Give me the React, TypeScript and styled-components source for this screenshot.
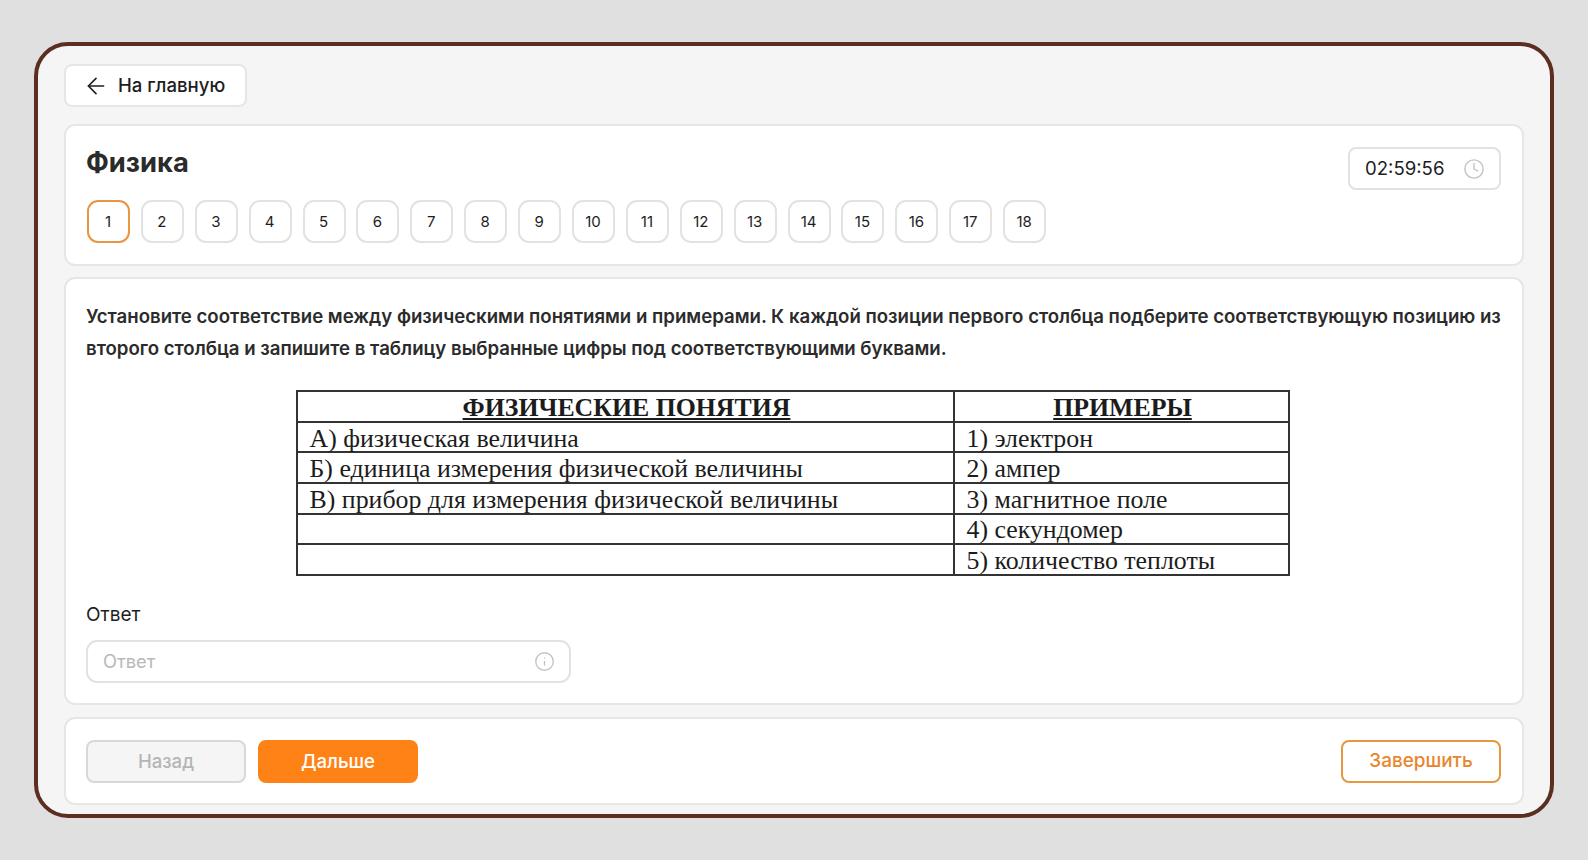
import React from "react";
import styled, { createGlobalStyle } from "styled-components";
import { ArrowLeft, Clock, Info } from "lucide-react";

const Global = createGlobalStyle`
  html, body { margin: 0; padding: 0; background: #e0e0e0; }
  body { font-family: Inter, "Noto Sans", sans-serif; color: #1e1e1e; }
  * { box-sizing: border-box; }
`;

const Page = styled.div`
  width: 1588px;
  height: 860px;
  padding: 42px 34px;
  overflow: hidden;
`;

const Frame = styled.main`
  width: 1520px;
  height: 776px;
  padding: 18px 26px 0;
  display: flex;
  flex-direction: column;
  background: #f5f5f5;
  border: 4px solid #5c2e22;
  border-radius: 34px;
`;

const BackButton = styled.button`
  width: 183px;
  height: 43px;
  padding: 0 0 0 17px;
  margin-bottom: 17px;
  display: flex;
  align-items: center;
  gap: 9px;
  background: #fff;
  border: 2px solid #e6e6e6;
  border-radius: 8px;
  font: 500 18.6px/1 Inter, sans-serif;
  color: #1e1e1e;
`;

const Panel = styled.section`
  background: #fff;
  border: 2px solid #e6e6e6;
  border-radius: 11px;
`;

const HeaderPanel = styled(Panel)`
  height: 142px;
  padding: 21px 21px 21px 20px;
  display: flex;
  justify-content: space-between;
  align-items: flex-start;
`;

const HeaderLeft = styled.div`
  display: flex;
  flex-direction: column;
`;

const Title = styled.h1`
  margin: -1px 0 20px;
  font: 700 27.3px/34px Inter, sans-serif;
  color: #2b2b2b;
`;

const Numbers = styled.nav`
  display: flex;
  gap: 10.9px;
  margin-left: 1px;
`;

const NumberButton = styled.button<{ $active?: boolean }>`
  width: 43px;
  height: 43px;
  padding: 0 1px 0 0;
  background: #fff;
  border: 2px solid ${(p) => (p.$active ? "#e8963f" : "#e2e2e2")};
  border-radius: 11px;
  font: 400 15px/1 Inter, sans-serif;
  color: #1e1e1e;
`;

const Timer = styled.div`
  width: 153px;
  height: 43px;
  padding: 0 14px 0 15px;
  display: flex;
  align-items: center;
  justify-content: space-between;
  border: 2px solid #e2e2e2;
  border-radius: 8px;
  font: 400 18.6px/1 Inter, sans-serif;
  color: #1e1e1e;
`;

const QuestionPanel = styled(Panel)`
  height: 428px;
  margin-top: 11px;
  padding: 21px 21px 21px 20px;
  display: flex;
  flex-direction: column;
`;

const Question = styled.p`
  margin: 0 0 25px;
  font: 600 18.63px/32.4px Inter, sans-serif;
  color: #2b2b2b;
`;

const Table = styled.table`
  width: 992px;
  height: 186px;
  flex: none;
  align-self: center;
  margin-right: 2px;
  table-layout: fixed;
  border-collapse: collapse;
  font-family: "Liberation Serif", "Times New Roman", serif;
  color: #1c1c1c;
`;

const HeadCell = styled.th`
  height: 31px;
  padding: 3px 0 0 3px;
  border: 2px solid #333;
  font-size: 25.8px;
  line-height: 24px;
  font-weight: 700;
  text-decoration: underline;
`;

const Cell = styled.td`
  height: 30px;
  padding: 3px 0 0 12px;
  border: 2px solid #333;
  font-size: 25.85px;
  line-height: 24px;
  white-space: nowrap;
`;

const Label = styled.label`
  margin: 27px 0 13px;
  font: 400 19px/24px Inter, sans-serif;
  color: #1e1e1e;
`;

const InputWrap = styled.div`
  position: relative;
  flex: none;
  width: 485px;
  height: 43px;
`;

const Input = styled.input`
  width: 100%;
  height: 100%;
  padding: 0 50px 0 15px;
  background: #fff;
  border: 2px solid #e2e2e2;
  border-radius: 11px;
  font: 400 18.3px/1 Inter, sans-serif;
  outline: none;
  &::placeholder { color: #b8b8b8; opacity: 1; }
`;

const InputIcon = styled.span`
  position: absolute;
  right: 16px;
  top: 11px;
  display: flex;
  color: #c2c2c2;
`;

const FooterPanel = styled(Panel)`
  height: 88px;
  margin-top: 12px;
  padding: 21px 21px 21px 20px;
  display: flex;
  align-items: center;
  gap: 12px;
`;

const Action = styled.button<{ $kind: "muted" | "primary" | "outline" }>`
  height: 43px;
  width: 160px;
  margin-left: ${(p) => (p.$kind === "outline" ? "auto" : "0")};
  border-radius: 8px;
  font: 500 ${(p) => (p.$kind === "outline" ? "18.9px" : "18.6px")}/1 Inter, sans-serif;
  background: ${(p) => (p.$kind === "muted" ? "#f5f5f5" : p.$kind === "primary" ? "#ff8216" : "#fff")};
  color: ${(p) => (p.$kind === "muted" ? "#b5b5b5" : p.$kind === "primary" ? "#fff" : "#e8862c")};
  border: 2px solid ${(p) => (p.$kind === "muted" ? "#d8d8d8" : p.$kind === "primary" ? "#ff8216" : "#e6983f")};
`;

const numbers = Array.from({ length: 18 }, (_, i) => i + 1);

const rows = [
  ["А) физическая величина", "1) электрон"],
  ["Б) единица измерения физической величины", "2) ампер"],
  ["В) прибор для измерения физической величины", "3) магнитное поле"],
  ["", "4) секундомер"],
  ["", "5) количество теплоты"],
];

export default function App() {
  return (
    <Page>
      <Global />
      <Frame>
        <BackButton>
          <ArrowLeft size={26} strokeWidth={1.5} />
          На главную
        </BackButton>
        <HeaderPanel>
          <HeaderLeft>
            <Title>Физика</Title>
            <Numbers>
              {numbers.map((n) => (
                <NumberButton key={n} $active={n === 1}>{n}</NumberButton>
              ))}
            </Numbers>
          </HeaderLeft>
          <Timer>
            02:59:56
            <Clock size={22} strokeWidth={1.5} color="#c2c2c2" />
          </Timer>
        </HeaderPanel>
        <QuestionPanel>
          <Question>
            Установите соответствие между физическими понятиями и примерами. К каждой позиции первого столбца подберите соответствующую позицию из второго столбца и запишите в таблицу выбранные цифры под соответствующими буквами.
          </Question>
          <Table>
            <colgroup>
              <col width={657} />
              <col width={335} />
            </colgroup>
            <thead>
              <tr>
                <HeadCell>ФИЗИЧЕСКИЕ ПОНЯТИЯ</HeadCell>
                <HeadCell>ПРИМЕРЫ</HeadCell>
              </tr>
            </thead>
            <tbody>
              {rows.map((r, i) => (
                <tr key={i}>
                  <Cell>{r[0]}</Cell>
                  <Cell>{r[1]}</Cell>
                </tr>
              ))}
            </tbody>
          </Table>
          <Label htmlFor="answer">Ответ</Label>
          <InputWrap>
            <Input id="answer" placeholder="Ответ" />
            <InputIcon>
              <Info size={21} strokeWidth={1.5} />
            </InputIcon>
          </InputWrap>
        </QuestionPanel>
        <FooterPanel>
          <Action $kind="muted">Назад</Action>
          <Action $kind="primary">Дальше</Action>
          <Action $kind="outline">Завершить</Action>
        </FooterPanel>
      </Frame>
    </Page>
  );
}
